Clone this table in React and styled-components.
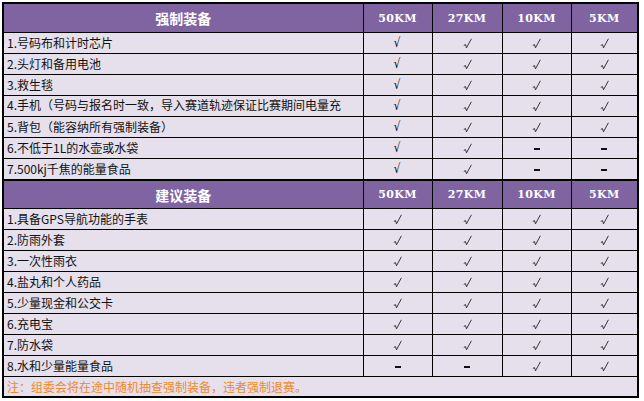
import React from 'react';
import styled, { createGlobalStyle } from 'styled-components';

const GlobalStyle = createGlobalStyle`
  html, body {
    margin: 0;
    padding: 0;
    background: #fff;
  }
  body {
    font-family: "Noto Sans CJK SC", "Liberation Sans", sans-serif;
  }
`;

const Page = styled.div`
  padding: 2px 5px 0 2px;
`;

const Table = styled.table`
  width: 637px;
  border-collapse: collapse;
  table-layout: fixed;
  border: 2px solid #000;
`;

const HeadCell = styled.th`
  height: ${p => p.$h}px;
  padding: 0;
  background: #8064a2;
  color: #fff;
  border: 1px solid #000;
  border-top-width: ${p => (p.$thick ? 2 : 1)}px;
  text-align: center;
  vertical-align: middle;
  font-weight: bold;
  font-size: 14px;
  font-family: "Noto Sans CJK SC", sans-serif;
`;

const KmCell = styled(HeadCell)`
  font-family: "DejaVu Serif", "Liberation Serif", serif;
  font-size: 11px;
  letter-spacing: 0.4px;
`;

const NameCell = styled.td`
  height: 20px;
  padding: 0 0 0 3px;
  background: #e5e0ec;
  border: 1px solid #000;
  font-size: 12px;
  line-height: 20px;
  color: #111;
  white-space: nowrap;
  overflow: hidden;
`;

const Wrapped = styled.div`
  height: 20px;
  overflow: hidden;
  line-height: 17px;
  white-space: normal;
`;

const MarkCell = styled.td`
  height: 20px;
  padding: 0;
  background: #e5e0ec;
  border: 1px solid #000;
  text-align: center;
  vertical-align: middle;
  font-family: "DejaVu Serif", "Liberation Serif", serif;
  font-size: 13px;
  line-height: 14px;
  color: #000;
`;

const Root = styled.span`
  display: inline-block;
  transform: scaleX(0.8);
`;

const Tick = styled.svg`
  display: inline-block;
  vertical-align: middle;
  width: 9px;
  height: 11px;
`;

const Dash = styled.span`
  display: inline-block;
  width: 6px;
  height: 2px;
  background: #111;
  vertical-align: middle;
`;

const NoteCell = styled.td`
  height: 19px;
  padding: 0 0 0 3px;
  background: #e5e0ec;
  border-top: 1px solid #000;
  font-size: 12px;
  color: #ee8a2e;
  white-space: nowrap;
`;

const KMS = ['50KM', '27KM', '10KM', '5KM'];

const required = [
  { name: '1.号码布和计时芯片', marks: ['v', 'i', 'i', 'i'] },
  { name: '2.头灯和备用电池', marks: ['v', 'i', 'i', 'i'] },
  { name: '3.救生毯', marks: ['v', 'i', 'i', 'i'] },
  {
    name: '4.手机（号码与报名时一致，导入赛道轨迹保证比赛期间电量充',
    more: '足）',
    marks: ['v', 'i', 'i', 'i'],
  },
  { name: '5.背包（能容纳所有强制装备）', marks: ['v', 'i', 'i', 'i'] },
  { name: '6.不低于1L的水壶或水袋', marks: ['v', 'i', '-', '-'] },
  { name: '7.500kj千焦的能量食品', marks: ['v', 'i', '-', '-'] },
];

const suggested = [
  { name: '1.具备GPS导航功能的手表', marks: ['i', 'i', 'i', 'i'] },
  { name: '2.防雨外套', marks: ['i', 'i', 'i', 'i'] },
  { name: '3.一次性雨衣', marks: ['i', 'i', 'i', 'i'] },
  { name: '4.盐丸和个人药品', marks: ['i', 'i', 'i', 'i'] },
  { name: '5.少量现金和公交卡', marks: ['i', 'i', 'i', 'i'] },
  { name: '6.充电宝', marks: ['i', 'i', 'i', 'i'] },
  { name: '7.防水袋', marks: ['i', 'i', 'i', 'i'] },
  { name: '8.水和少量能量食品', marks: ['-', '-', 'i', 'i'] },
];

// slanted tick used in most columns
const SlantTick = () => (
  <Tick viewBox="0 0 9 11">
    <path d="M0.8 7.4 L2.5 6.6 L3.5 9.8 L8.4 0.8" fill="none" stroke="#222" strokeWidth="0.9" />
  </Tick>
);

const Mark = ({ type }) => {
  if (type === '-') return <Dash />;
  if (type === 'i') return <SlantTick />;
  return <Root>√</Root>;
};

const Header = ({ title, h, thick }) => (
  <tr>
    <HeadCell $h={h} $thick={thick}>{title}</HeadCell>
    {KMS.map(km => (
      <KmCell key={km} $h={h} $thick={thick}>{km}</KmCell>
    ))}
  </tr>
);

const Row = ({ item }) => (
  <tr>
    <NameCell>
      {item.more ? (
        <Wrapped>
          {item.name}
          <br />
          {item.more}
        </Wrapped>
      ) : (
        item.name
      )}
    </NameCell>
    {item.marks.map((m, i) => (
      <MarkCell key={i}>
        <Mark type={m} />
      </MarkCell>
    ))}
  </tr>
);

export default function App() {
  return (
    <Page>
      <GlobalStyle />
      <Table>
        <colgroup>
          <col style={{ width: 360 }} />
          <col style={{ width: 69 }} />
          <col style={{ width: 70 }} />
          <col style={{ width: 69 }} />
          <col style={{ width: 67 }} />
        </colgroup>
        <tbody>
          <Header title="强制装备" h={28} />
          {required.map(item => (
            <Row key={item.name} item={item} />
          ))}
          <Header title="建议装备" h={27} thick />
          {suggested.map(item => (
            <Row key={item.name} item={item} />
          ))}
          <tr>
            <NoteCell colSpan={5}>注：组委会将在途中随机抽查强制装备，违者强制退赛。</NoteCell>
          </tr>
        </tbody>
      </Table>
    </Page>
  );
}
